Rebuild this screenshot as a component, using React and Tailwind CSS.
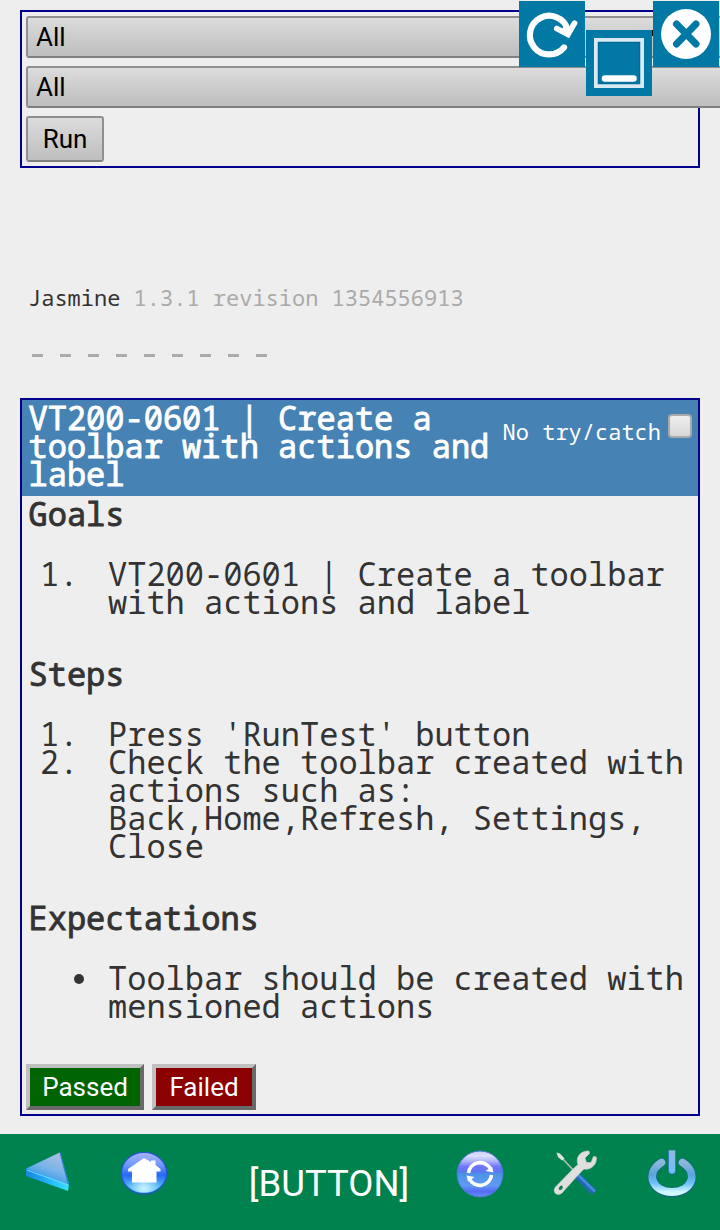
import React from "react";

const MONO =
  "font-['Droid_Sans_Mono','Noto_Sans_Mono','DejaVu_Sans_Mono',monospace]";

function Select({ label }) {
  return (
    <div className="flex h-[42px] w-[760px] shrink-0 items-center rounded-[3px] border-2 border-[#8f8f8f] border-b-[#808080] bg-linear-to-b from-[#dcdcdc] to-[#bebebe] pl-2 text-[26px] leading-none text-black">
      {label}
    </div>
  );
}

function Heading({ children }) {
  return (
    <h2 className="h-7 pl-[2.5px] [-webkit-text-stroke:0.9px_#333]">{children}</h2>
  );
}

function Item({ marker, children }) {
  return (
    <li className="flex">
      <span className="w-20 shrink-0 whitespace-pre pl-3">{marker}</span>
      <span className="whitespace-pre">{children}</span>
    </li>
  );
}

function RefreshTile() {
  return (
    <svg className="absolute left-[519px] top-px" width="66" height="66" viewBox="0 0 66 66">
      <rect width="66" height="66" fill="#0279a4" />
      <path d="M45 46.5 A19.3 19.3 0 1 1 48.500 28" fill="none" stroke="#fff" strokeWidth="6.2" strokeLinecap="round" />
      <path d="M37.700 27.500 L49 33.500 L55.500 22.200" fill="none" stroke="#fff" strokeWidth="5.600" strokeLinecap="round" strokeLinejoin="miter" />
      <path d="M46 24 L53 26 L49 33 L42 29Z" fill="#fff" />
    </svg>
  );
}

function MinimizeTile() {
  return (
    <svg className="absolute left-[586px] top-[30px]" width="66" height="66" viewBox="0 0 66 66">
      <rect width="66" height="66" fill="#0279a4" />
      <rect x="10" y="10" width="46" height="46" fill="none" stroke="#d9ebf2" strokeWidth="4" />
      <rect x="12.5" y="12.5" width="41" height="41" fill="none" stroke="#016a99" strokeWidth="1.5" />
      <path d="M19 48.5H47.5" stroke="#fff" strokeWidth="6.5" strokeLinecap="round" />
    </svg>
  );
}

function CloseTile() {
  return (
    <svg className="absolute left-[653px] top-px" width="66" height="66" viewBox="0 0 66 66">
      <rect width="66" height="66" fill="#0279a4" />
      <circle cx="33" cy="33" r="25" fill="#fff" />
      <path d="M23.5 23 L43 43 M43 23 L23.5 43" stroke="#0279a4" strokeWidth="7" strokeLinecap="round" />
    </svg>
  );
}

function BackIcon() {
  return (
    <svg width="48" height="48" viewBox="0 0 48 48">
      <defs>
        <linearGradient id="backTop" x1="0.8" y1="0" x2="0.3" y2="1">
          <stop offset="0" stopColor="#b0bde6" />
          <stop offset="0.5" stopColor="#7ab4e8" />
          <stop offset="1" stopColor="#168cea" />
        </linearGradient>
        <linearGradient id="backEdge">
          <stop offset="0" stopColor="#1687e0" />
          <stop offset="0.4" stopColor="#20a8f5" />
          <stop offset="1" stopColor="#35e4ff" />
        </linearGradient>
      </defs>
      <path d="M2 18.5 L36 2.5 L45 34 L44 41 L2 26Z" fill="url(#backEdge)" />
      <path d="M2.5 18.5 L36 2.5 L44.5 34.5Z" fill="url(#backTop)" />
      <path d="M36 2.5 L44.5 34.5" stroke="#2d82cc" strokeWidth="1.2" />
      <path d="M3 20 L44 35" stroke="#6fd1ff" strokeWidth="1.2" />
    </svg>
  );
}

function HomeIcon() {
  return (
    <svg width="48" height="48" viewBox="0 0 48 48">
      <defs>
        <linearGradient id="homeBall" x1="0" y1="0" x2="0" y2="1">
          <stop offset="0" stopColor="#a6b4fa" />
          <stop offset="0.3" stopColor="#7399fb" />
          <stop offset="0.55" stopColor="#2668f4" />
          <stop offset="0.78" stopColor="#4daaf8" />
          <stop offset="1" stopColor="#62c9fb" />
        </linearGradient>
        <radialGradient id="homeGlow" cx="0.5" cy="0.9" r="0.4">
          <stop offset="0" stopColor="#c8f7ff" />
          <stop offset="1" stopColor="#c8f7ff" stopOpacity="0" />
        </radialGradient>
      </defs>
      <ellipse cx="24" cy="23.5" rx="23.5" ry="22" fill="#17659b" opacity="0.55" />
      <ellipse cx="24" cy="23" rx="22.6" ry="20.7" fill="url(#homeBall)" stroke="#2355cc" strokeWidth="1.2" />
      <ellipse cx="24" cy="23" rx="21.5" ry="19.5" fill="url(#homeGlow)" />
      <path d="M24 8 L31 12 V10.5 H35.5 V15 L40.5 19 V21.5 H36.5 V32.5 H12 V21.5 H8 V19Z" fill="#fff" />
    </svg>
  );
}

function ReloadIcon() {
  return (
    <svg width="48" height="48" viewBox="0 0 48 48">
      <defs>
        <linearGradient id="reloadBall" x1="0" y1="0" x2="0" y2="1">
          <stop offset="0" stopColor="#c4ccfa" />
          <stop offset="0.1" stopColor="#dde1fb" />
          <stop offset="0.22" stopColor="#adb5fa" />
          <stop offset="0.34" stopColor="#6f74fb" />
          <stop offset="0.46" stopColor="#5c78f2" />
          <stop offset="0.5" stopColor="#4b94e6" />
          <stop offset="0.75" stopColor="#619af5" />
          <stop offset="0.88" stopColor="#536bf5" />
          <stop offset="1" stopColor="#6a90fa" />
        </linearGradient>
      </defs>
      <circle cx="24" cy="24" r="23" fill="url(#reloadBall)" stroke="#477bd0" strokeWidth="1" />
      <path d="M12.500 23 A11.600 11.300 0 0 1 34.500 19 M35.500 25 A11.600 11.300 0 0 1 13.500 29" fill="none" stroke="#fff" strokeWidth="3.6" />
      <path d="M29.500 21 L36 16.500 L37.500 22.500Z M10.500 25.500 L18.500 27 L12 31.500Z" fill="#fff" />
    </svg>
  );
}

function ToolsIcon() {
  return (
    <svg width="48" height="48" viewBox="0 0 48 48">
      <path d="M8 6 L25 24" stroke="#a9bbb2" strokeWidth="1.8" />
      <path d="M4.500 2.500 L8 3.500 L12.500 8.500 L10 10.500 L6 7Z" fill="#dfe2e0" />
      <path d="M25 25.500 L42 42.5" stroke="#2267b5" strokeWidth="6.5" />
      <path d="M25.500 24.500 L43 41.5" stroke="#438de0" strokeWidth="2.5" />
      <path d="M37 1 C29 .5 23 7 26 14.500 L20 20 L3.500 37 C0 41.500 4 46.500 9.500 43.500 L27 24 L32 19 C39 20.500 45.500 14 44.300 7 L41.500 6.500 L39 12.500 L34.500 12.500 L33 8 L37.500 3.500Z" fill="#dedfde" stroke="#c5cac7" strokeWidth="0.7" />
      <ellipse cx="8.800" cy="37.800" rx="1.7" ry="2.5" fill="#168055" transform="rotate(40 8.8 37.8)" />
    </svg>
  );
}

function PowerIcon() {
  return (
    <svg width="48" height="48" viewBox="0 0 48 48">
      <defs>
        <linearGradient id="powerRing" x1="0" y1="0" x2="0" y2="1">
          <stop offset="0" stopColor="#8ab8da" />
          <stop offset="0.4" stopColor="#5ba2da" />
          <stop offset="0.7" stopColor="#6cc0f9" />
          <stop offset="1" stopColor="#d0f8ff" />
        </linearGradient>
        <linearGradient id="powerStem" x1="0" y1="0" x2="0" y2="1">
          <stop offset="0" stopColor="#8fb6df" />
          <stop offset="1" stopColor="#6fc0fa" />
        </linearGradient>
      </defs>
      <path d="M13.500 12.500 C-3 23 4 42.500 24 42.500 C44 42.500 51 23 34.500 12.500" fill="none" stroke="#14608a" strokeWidth="9" strokeLinecap="round" />
      <path d="M13.500 12.500 C-3 23 4 42 24 42 C44 42 51 23 34.500 12.500" fill="none" stroke="url(#powerRing)" strokeWidth="7.8" strokeLinecap="round" />
      <path d="M20.500 0 H27.500 V20.500 A3.500 3.500 0 0 1 20.500 20.500Z" fill="url(#powerStem)" stroke="#2876b4" strokeWidth="0.8" />
    </svg>
  );
}

export default function App() {
  return (
    <div className="relative flex h-[1230px] w-[720px] flex-col overflow-hidden bg-[#eeeeee] font-[Roboto,sans-serif] text-[#333]">
      <section className="mx-5 mt-2.5 flex h-[158px] flex-col items-start gap-2 border-2 border-[#00008b] p-1">
        <Select label="All" />
        <Select label="All" />
        <button className="h-[46px] w-[78px] rounded-[3px] border-2 border-[#8f8f8f] border-b-[#808080] bg-linear-to-b from-[#dcdcdc] to-[#bebebe] text-[26px] leading-none text-black">
          Run
        </button>
      </section>

      <div className={`mt-[115px] h-[115px] pl-7 ${MONO}`}>
        <p className="h-7 whitespace-pre text-[22px] leading-7">
          Jasmine <span className="text-[#aaa]">1.3.1 revision 1354556913</span>
        </p>
        <div className="mt-[43px] flex gap-[17px] pl-1">
          {[0, 1, 2, 3, 4, 5, 6, 7, 8].map((n) => (
            <span key={n} className="h-[3px] w-[11px] bg-[#aaa]" />
          ))}
        </div>
      </div>

      <section className={`mx-5 flex h-[718px] flex-col border-2 border-[#00008b] text-[32px] leading-7 ${MONO}`}>
        <header className="flex h-24 shrink-0 items-start justify-between bg-[#4682b4] pl-[6.5px] pr-1.5 pt-1 text-white">
          <h1 className="whitespace-pre [-webkit-text-stroke:0.9px_#fff]">
            {"VT200-0601 | Create a\ntoolbar with actions and\nlabel"}
          </h1>
          <label className="mt-2.5 flex items-start gap-[7px] text-[22px]">
            <span className="mt-[3px]">No try/catch</span>
            <span className="h-6 w-6 rounded-[4px] border-2 border-[#aaa] bg-linear-to-b from-[#eee] to-[#d8d8d8]" />
          </label>
        </header>

        <div className="flex flex-col pl-1 pt-1">
          <Heading>Goals</Heading>
          <ol className="mt-8 pl-0.5">
            <Item marker="1.">{"VT200-0601 | Create a toolbar\nwith actions and label"}</Item>
          </ol>
          <div className="mt-11">
            <Heading>Steps</Heading>
          </div>
          <ol className="mt-8 pl-0.5">
            <Item marker="1.">Press 'RunTest' button</Item>
            <Item marker="2.">
              {"Check the toolbar created with\nactions such as:\nBack,Home,Refresh, Settings,\nClose"}
            </Item>
          </ol>
          <div className="mt-11">
            <Heading>Expectations</Heading>
          </div>
          <ul className="mt-8 pl-0.5">
            <Item
              marker={<span className="ml-[34px] inline-block size-2.5 -translate-y-1.5 rounded-full bg-[#333]" />}
            >
              {"Toolbar should be created with\nmensioned actions"}
            </Item>
          </ul>
          <div className="mt-11 flex gap-2 font-[Roboto,sans-serif] text-[26px] text-white">
            <button className="h-[46px] w-[118px] border-4 border-b-[#696969] border-l-[#c0c0c0] border-r-[#696969] border-t-[#c0c0c0] bg-[#006400] leading-none">
              Passed
            </button>
            <button className="h-[46px] w-[104px] border-4 border-b-[#696969] border-l-[#c0c0c0] border-r-[#696969] border-t-[#c0c0c0] bg-[#8b0000] leading-none">
              Failed
            </button>
          </div>
        </div>
      </section>

      <footer className="mt-[18px] flex h-24 items-start bg-[#00824f] px-6 pt-4">
        <BackIcon />
        <div className="ml-12">
          <HomeIcon />
        </div>
        <span className="ml-[65px] mr-[31px] mt-[13px] w-48 text-center text-[36.500px] leading-[42px] text-white">[BUTTON]</span>
        <div className="flex gap-12">
          <ReloadIcon />
          <ToolsIcon />
          <PowerIcon />
        </div>
      </footer>

      <span className="absolute left-[651px] top-[30px] h-1.5 w-[3px] bg-black" />
      <RefreshTile />
      <MinimizeTile />
      <CloseTile />
    </div>
  );
}
